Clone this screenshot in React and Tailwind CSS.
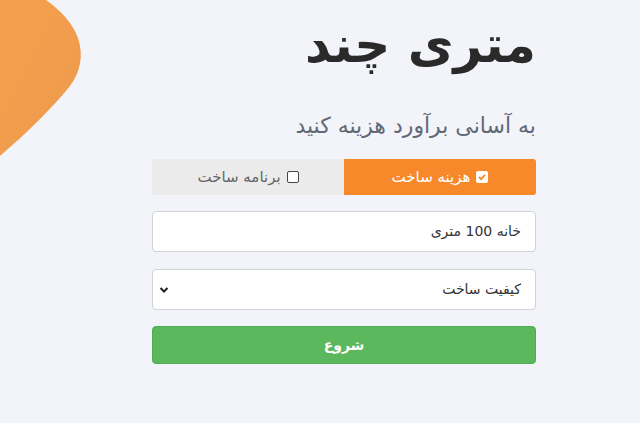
import React from "react";

export default function App() {
  return (
    <div className="relative w-[640px] h-[427px] bg-white overflow-hidden" style={{ fontFamily: '"DejaVu Sans", sans-serif' }}>
      <div className="h-[423px] bg-[#f3f4f9]">
        <svg className="absolute left-0 top-0" width="100" height="170" viewBox="0 0 100 170">
          <defs>
            <linearGradient id="g" x1="0" y1="0" x2="1" y2="1">
              <stop offset="0" stopColor="#f3a04e" />
              <stop offset="1" stopColor="#ee9a4c" />
            </linearGradient>
          </defs>
          <path d="M0 0 L46 0 C60 10 72 22 78 38 C84 56 80 72 70 86 C54 106 30 130 0 156 Z" fill="url(#g)" />
        </svg>
        <div className="flex flex-col pl-[152px] w-[536px]" dir="rtl">
          <h1 className="mt-[14px] h-[62px] text-[50px] leading-[62px] font-bold text-[#2a2a2a] text-right">متری چند</h1>
          <p className="mt-[36px] text-[22px] leading-[28px] font-medium text-[#5e6877] text-right">به آسانی برآورد هزینه کنید</p>
          <div className="mt-[19px] flex h-[36px] rounded-[3px] overflow-hidden">
            <div className="flex-1 bg-[#f7892b] text-white flex items-center justify-center gap-[6px] text-[15px]">
              <span className="w-[12px] h-[12px] bg-white rounded-[2px] flex items-center justify-center">
                <svg width="10" height="10" viewBox="0 0 10 10"><path d="M2 5 L4.2 7.2 L8 2.8" stroke="#f7892b" strokeWidth="1.8" fill="none" /></svg>
              </span>
              <span>هزینه ساخت</span>
            </div>
            <div className="flex-1 bg-[#ebebeb] text-[#666] flex items-center justify-center gap-[6px] text-[15px]">
              <span className="w-[12px] h-[12px] border border-[#444] rounded-[2px] bg-white"></span>
              <span>برنامه ساخت</span>
            </div>
          </div>
          <div className="mt-[16px] h-[41px] bg-white border border-[#cfd2d6] rounded-[4px] flex items-center px-[14px] text-[14px] text-[#333]">
            خانه 100 متری
          </div>
          <div className="mt-[17px] h-[41px] bg-white border border-[#cfd2d6] rounded-[4px] flex items-center justify-between px-[14px] pl-[6px] text-[14px] text-[#333]">
            <span>کیفیت ساخت</span>
            <svg width="10" height="8" viewBox="0 0 10 8"><path d="M1.5 2 L5 5.5 L8.5 2" stroke="#222" strokeWidth="2" fill="none" /></svg>
          </div>
          <div className="mt-[16px] h-[38px] bg-[#5cb85c] border border-[#4cae4c] rounded-[4px] flex items-center justify-center text-white text-[14px] font-bold">
            شروع
          </div>
        </div>
      </div>
    </div>
  );
}
